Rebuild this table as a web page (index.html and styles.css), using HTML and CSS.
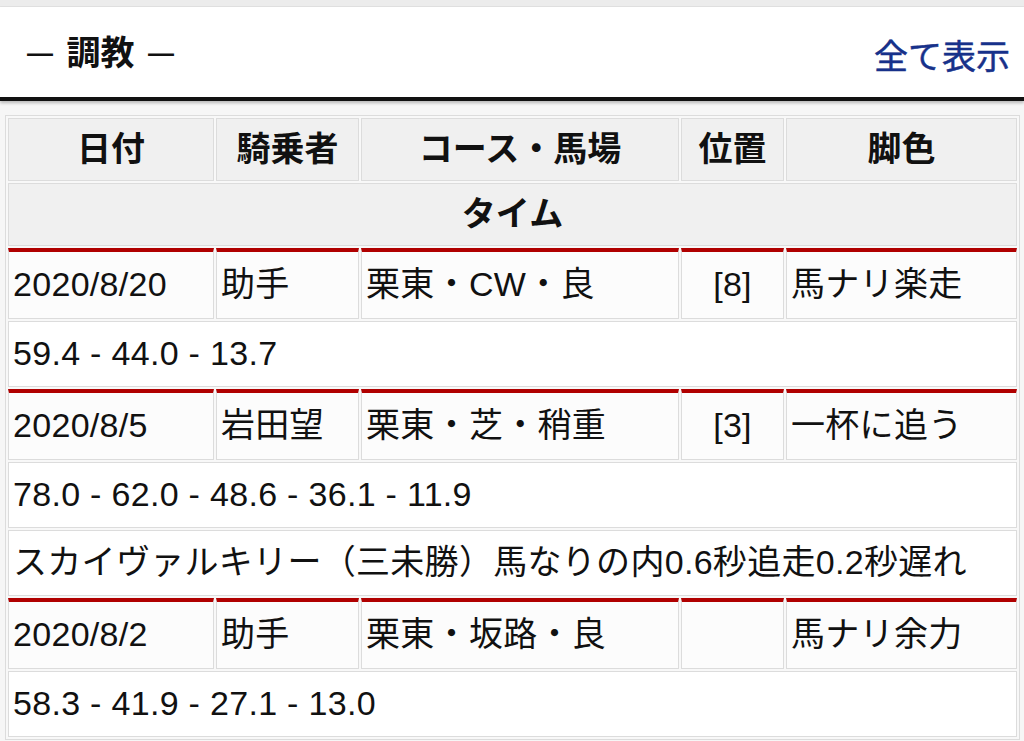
FILE: index.html
```html
<!DOCTYPE html>
<html lang="ja">
<head>
<meta charset="utf-8">
<title>調教</title>
<link rel="stylesheet" href="styles.css">
</head>
<body>
<div class="topstrip"></div>
<header class="head">
  <h2 class="title"><span class="dash">—</span> 調教 <span class="dash">—</span></h2>
  <a class="more" href="#">全て表示</a>
</header>
<div class="wrap">
  <table class="train">
    <colgroup>
      <col class="c1"><col class="c2"><col class="c3"><col class="c4"><col class="c5">
    </colgroup>
    <thead>
      <tr><th>日付</th><th>騎乗者</th><th>コース・馬場</th><th>位置</th><th>脚色</th></tr>
      <tr><th colspan="5">タイム</th></tr>
    </thead>
    <tbody>
      <tr class="main"><td>2020/8/20</td><td>助手</td><td>栗東・CW・良</td><td class="pos">[8]</td><td>馬ナリ楽走</td></tr>
      <tr class="sub"><td colspan="5">59.4 - 44.0 - 13.7</td></tr>
      <tr class="main"><td>2020/8/5</td><td>岩田望</td><td>栗東・芝・稍重</td><td class="pos">[3]</td><td>一杯に追う</td></tr>
      <tr class="sub"><td colspan="5">78.0 - 62.0 - 48.6 - 36.1 - 11.9</td></tr>
      <tr class="sub"><td colspan="5">スカイヴァルキリー（三未勝）馬なりの内0.6秒追走0.2秒遅れ</td></tr>
      <tr class="main"><td>2020/8/2</td><td>助手</td><td>栗東・坂路・良</td><td class="pos"></td><td>馬ナリ余力</td></tr>
      <tr class="sub"><td colspan="5">58.3 - 41.9 - 27.1 - 13.0</td></tr>
    </tbody>
  </table>
</div>
</body>
</html>
```
FILE: styles.css
```css
html, body {
  margin: 0;
  padding: 0;
  background: #f6f6f6;
  font-family: "Liberation Sans", "Noto Sans CJK JP", sans-serif;
  color: #111;
}
.topstrip {
  height: 6px;
  background: #ececec;
  border-bottom: 1px solid #e2e2e2;
}
.head {
  height: 90px;
  background: #fff;
  border-bottom: 4px solid #111;
  box-shadow: 0 2px 3px rgba(0, 0, 0, 0.25);
  display: flex;
  align-items: center;
  justify-content: space-between;
  padding: 0 14px 0 27px;
  position: relative;
}
.title {
  margin: 0;
  font-size: 34px;
  font-weight: bold;
  line-height: 1;
  padding-top: 2px;
}
.dash {
  display: inline-block;
  font-size: 26px;
  vertical-align: 3px;
  margin: 0 4px;
}
.dash:first-child {
  margin-left: 0;
}
.more {
  font-size: 34px;
  color: #17318a;
  text-decoration: none;
  line-height: 1;
  padding-top: 10px;
  -webkit-text-stroke: 0.5px #17318a;
}
.wrap {
  padding: 14px 6px 0 5px;
}
.train {
  width: 1013px;
  table-layout: fixed;
  border-collapse: separate;
  border-spacing: 2px;
  border: 1px solid #dcdcdc;
  background: #f8f8f8;
  font-size: 34px;
  line-height: 45px;
}
.c1 { width: 206px; }
.c2 { width: 143px; }
.c3 { width: 318px; }
.c4 { width: 103px; }
.c5 { width: 231px; }
.train th {
  background: #f0f0f0;
  border: 1px solid #dcdcdc;
  padding: 8px 4px;
  font-weight: bold;
  text-align: center;
}
.train td {
  background: #fff;
  border: 1px solid #dcdcdc;
  padding: 9px 4px 10px;
  text-align: left;
  white-space: nowrap;
  overflow: hidden;
  letter-spacing: 0.3px;
}
.train tr.main td {
  background: #fcfcfc;
  border-top: 4px solid #b00000;
  padding-top: 10px;
  padding-bottom: 11px;
}
.train td.pos {
  text-align: center;
}
```
